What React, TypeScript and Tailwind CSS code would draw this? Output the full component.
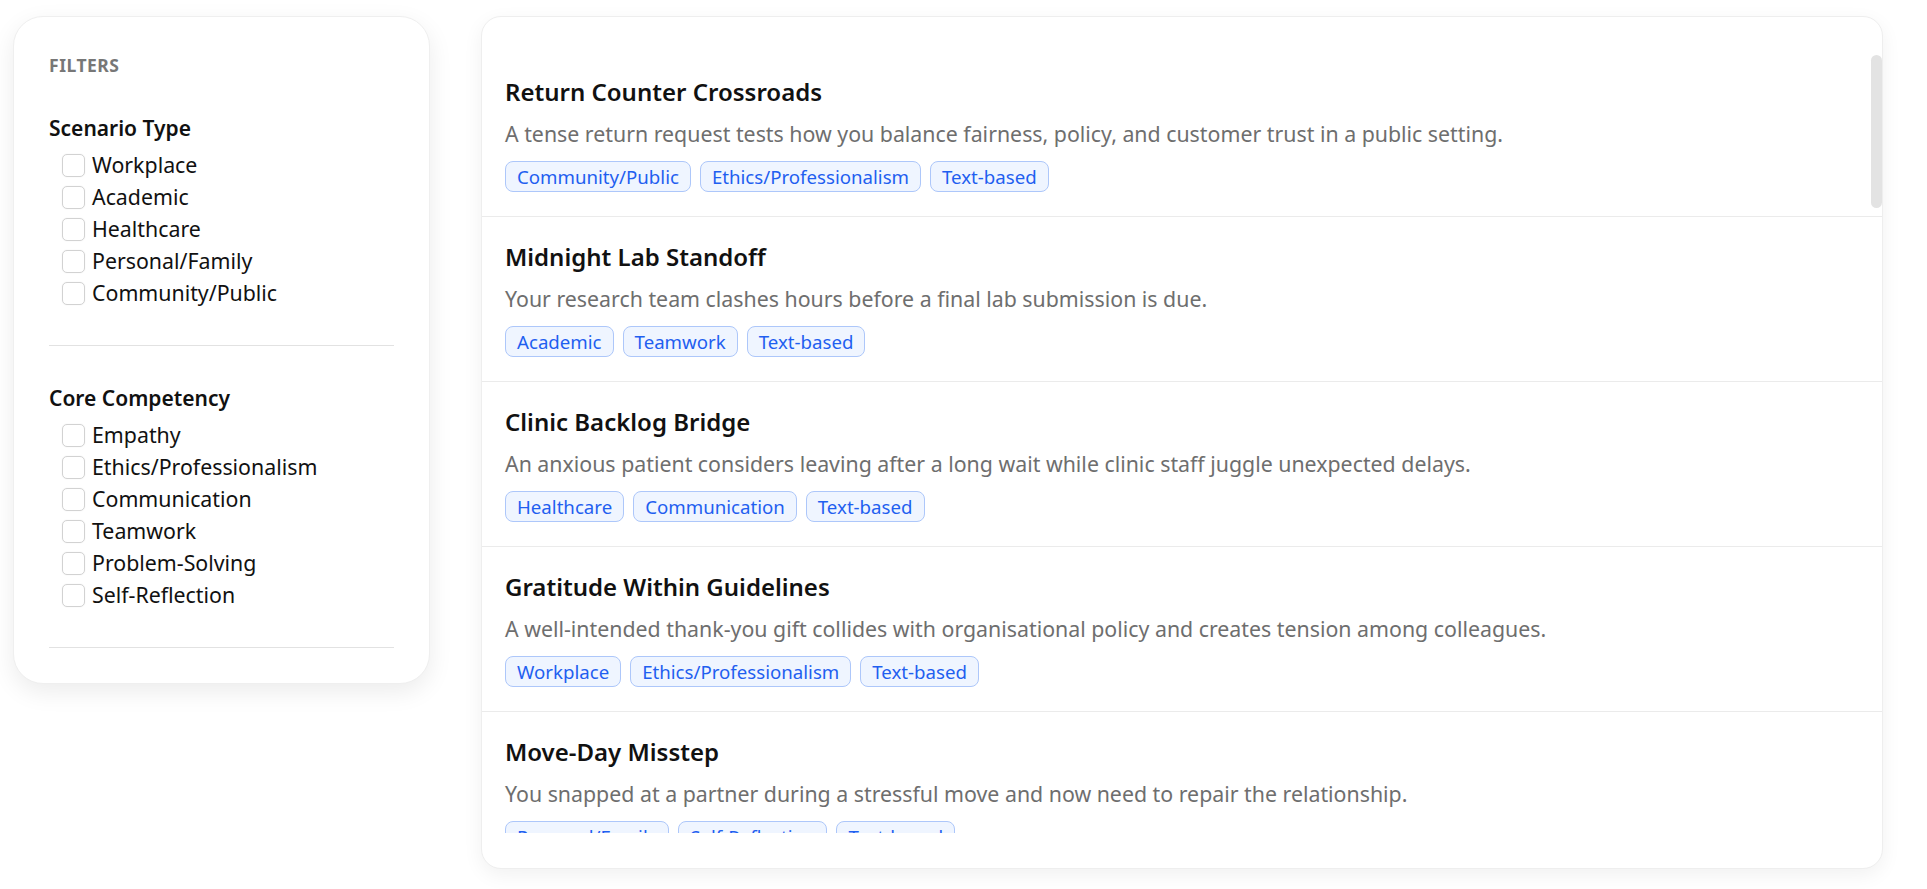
import React from 'react';

type Scenario = {
  title: string;
  description: string;
  tags: string[];
};

const scenarioTypes = ['Workplace', 'Academic', 'Healthcare', 'Personal/Family', 'Community/Public'];
const competencies = ['Empathy', 'Ethics/Professionalism', 'Communication', 'Teamwork', 'Problem-Solving', 'Self-Reflection'];

const scenarios: Scenario[] = [
  {
    title: 'Return Counter Crossroads',
    description: 'A tense return request tests how you balance fairness, policy, and customer trust in a public setting.',
    tags: ['Community/Public', 'Ethics/Professionalism', 'Text-based'],
  },
  {
    title: 'Midnight Lab Standoff',
    description: 'Your research team clashes hours before a final lab submission is due.',
    tags: ['Academic', 'Teamwork', 'Text-based'],
  },
  {
    title: 'Clinic Backlog Bridge',
    description: 'An anxious patient considers leaving after a long wait while clinic staff juggle unexpected delays.',
    tags: ['Healthcare', 'Communication', 'Text-based'],
  },
  {
    title: 'Gratitude Within Guidelines',
    description: 'A well-intended thank-you gift collides with organisational policy and creates tension among colleagues.',
    tags: ['Workplace', 'Ethics/Professionalism', 'Text-based'],
  },
  {
    title: 'Move-Day Misstep',
    description: 'You snapped at a partner during a stressful move and now need to repair the relationship.',
    tags: ['Personal/Family', 'Self-Reflection', 'Text-based'],
  },
  {
    title: 'Shift Swap Squeeze',
    description: 'Two coworkers ask you to cover the same weekend shift and both expect a yes.',
    tags: ['Workplace', 'Problem-Solving', 'Text-based'],
  },
  {
    title: 'Group Project Silence',
    description: 'One teammate has gone quiet a week before the group presentation.',
    tags: ['Academic', 'Communication', 'Text-based'],
  },
  {
    title: 'Bedside Bad News',
    description: 'A family member asks you for answers you are not allowed to give yet.',
    tags: ['Healthcare', 'Empathy', 'Text-based'],
  },
  {
    title: 'Holiday Table Tension',
    description: 'An old disagreement resurfaces at a family dinner and everyone looks to you.',
    tags: ['Personal/Family', 'Empathy', 'Text-based'],
  },
  {
    title: 'Neighbourhood Noise Notice',
    description: 'A neighbour complaint about late-night noise turns into a heated doorstep conversation.',
    tags: ['Community/Public', 'Communication', 'Text-based'],
  },
  {
    title: 'Credit Where It Is Due',
    description: 'A manager presents your idea in a meeting without mentioning your name.',
    tags: ['Workplace', 'Self-Reflection', 'Text-based'],
  },
  {
    title: 'Exam Integrity Dilemma',
    description: 'A friend shares answers to an upcoming exam in your study group chat.',
    tags: ['Academic', 'Ethics/Professionalism', 'Text-based'],
  },
  {
    title: 'Night Shift Handover',
    description: 'Key patient details are missing from a rushed handover at the end of a long shift.',
    tags: ['Healthcare', 'Teamwork', 'Text-based'],
  },
  {
    title: 'Sibling Care Roster',
    description: 'Caring for an ageing parent has fallen unevenly between you and your siblings.',
    tags: ['Personal/Family', 'Problem-Solving', 'Text-based'],
  },
  {
    title: 'Volunteer Rota Rift',
    description: 'Long-time volunteers resist changes to how the community pantry is organised.',
    tags: ['Community/Public', 'Teamwork', 'Text-based'],
  },
  {
    title: 'Deadline Domino',
    description: 'A supplier delay threatens a client launch and the team needs a new plan today.',
    tags: ['Workplace', 'Problem-Solving', 'Text-based'],
  },
  {
    title: 'Feedback That Stings',
    description: 'A tutor returns harsh comments on work you were proud of.',
    tags: ['Academic', 'Self-Reflection', 'Text-based'],
  },
  {
    title: 'Language Barrier at Triage',
    description: 'A worried parent and a busy nurse struggle to understand each other at triage.',
    tags: ['Healthcare', 'Communication', 'Text-based'],
  },
  {
    title: 'Borrowed Money Moment',
    description: 'A close friend has not repaid a loan and the topic keeps getting avoided.',
    tags: ['Personal/Family', 'Communication', 'Text-based'],
  },
  {
    title: 'Library Quiet Zone',
    description: 'A group of students keeps talking loudly in a shared quiet study space.',
    tags: ['Community/Public', 'Empathy', 'Text-based'],
  },
  {
    title: 'New Hire Onboarding',
    description: 'A new colleague is struggling and hesitant to ask the team for help.',
    tags: ['Workplace', 'Empathy', 'Text-based'],
  },
  {
    title: 'Lab Data Discrepancy',
    description: 'You notice results in a shared dataset that do not match the recorded method.',
    tags: ['Academic', 'Ethics/Professionalism', 'Text-based'],
  },
  {
    title: 'Medication Mix-Up',
    description: 'A near miss on the ward raises questions about who should report it and how.',
    tags: ['Healthcare', 'Ethics/Professionalism', 'Text-based'],
  },
  {
    title: 'Town Hall Turnout',
    description: 'Residents arrive frustrated at a public meeting about a delayed local project.',
    tags: ['Community/Public', 'Problem-Solving', 'Text-based'],
  },
];

const FilterSection = ({ title, options, className }: { title: string; options: string[]; className: string }) => (
  <div className={`border-b border-[#e2e2e2] pb-[36px] ${className}`}>
    <h3 className="text-[21px] leading-[30px] font-semibold text-[#111]">{title}</h3>
    <div className="mt-[6px] flex flex-col">
      {options.map((opt) => (
        <label key={opt} className="flex items-center h-[32px] ml-[13px] gap-[7px] cursor-pointer">
          <input
            type="checkbox"
            className="appearance-none w-[23px] h-[23px] shrink-0 rounded-[5px] border border-[#d2d2d2] bg-white shadow-[0_0_2px_rgba(0,0,0,0.06)]"
          />
          <span className="text-[21.33px] leading-[30px] text-[#111]">{opt}</span>
        </label>
      ))}
    </div>
  </div>
);

const ScenarioItem = ({ item }: { item: Scenario }) => (
  <div className="border-b border-[#ebebeb] px-[23px] pt-[23px] pb-[24px]">
    <h2 className="text-[24px] leading-[33px] font-semibold text-[#111]">{item.title}</h2>
    <p className="mt-[11px] text-[21.33px] leading-[30px] text-[#6e6e6e]">{item.description}</p>
    <div className="mt-[12px] flex gap-[9px]">
      {item.tags.map((tag) => (
        <span
          key={tag}
          className="h-[31px] flex items-center px-[11px] rounded-[8px] border border-[#adc7fa] bg-[#eff5ff] text-[18.67px] text-[#1f5ff0]"
        >
          {tag}
        </span>
      ))}
    </div>
  </div>
);

export default function App() {
  return (
    <div className="min-h-screen bg-white pl-[13px] pt-[16px] font-['Noto_Sans',sans-serif]">
      <div className="flex items-start gap-[51px]">
        {/* Filters */}
        <aside className="w-[417px] shrink-0 rounded-[30px] border border-[#efefef] bg-white px-[35px] py-[35px] shadow-[0_8px_24px_rgba(0,0,0,0.08)]">
          <div className="text-[17.5px] leading-[26px] font-bold tracking-[0.03em] text-[#777]">FILTERS</div>
          <FilterSection title="Scenario Type" options={scenarioTypes} className="pt-[35px]" />
          <FilterSection title="Core Competency" options={competencies} className="pt-[37px]" />
        </aside>

        {/* Scenario list */}
        <main className="relative w-[1402px] h-[853px] shrink-0 rounded-[20px] border border-[#eeeeee] bg-white py-[35px] shadow-[0_6px_20px_rgba(0,0,0,0.06)]">
          <div className="h-full overflow-y-auto [scrollbar-width:none]">
            {scenarios.map((s) => (
              <ScenarioItem key={s.title} item={s} />
            ))}
          </div>
          {/* overlay scroll thumb */}
          <div className="absolute right-0 top-[38px] w-[11px] h-[153px] rounded-full bg-[#e3e3e3]" />
        </main>
      </div>
    </div>
  );
}
